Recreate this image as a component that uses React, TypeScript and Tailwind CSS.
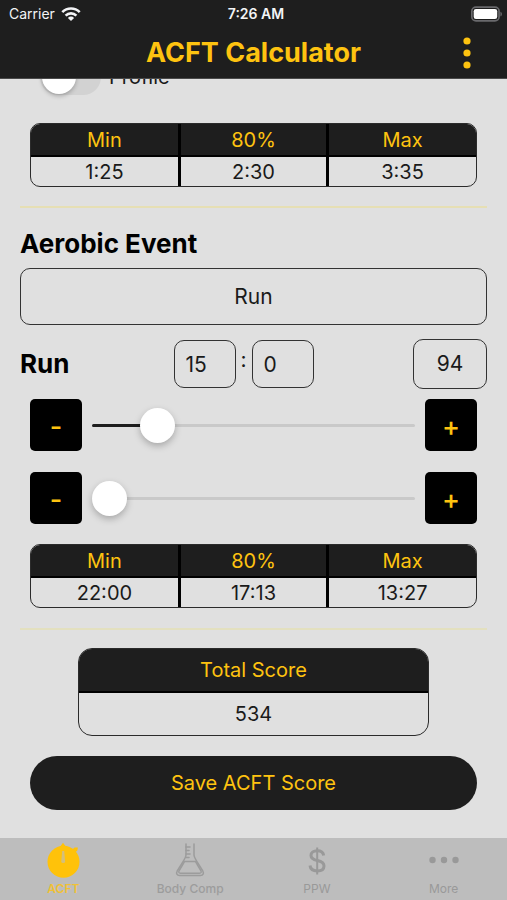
import { useState } from "react";
import type { ReactNode } from "react";

const AEROBIC_EVENTS = ["Run", "Row", "Bike", "Swim"];

function StatusBar() {
  return (
    <div className="grid h-7 grid-cols-3 items-center pl-[9px] pr-1 text-sm text-gray-100">
      <div className="flex items-center gap-1.5">
        <span>Carrier</span>
        <svg viewBox="0 0 20 15" className="h-4 w-5" fill="none" stroke="currentColor" strokeWidth="2.6" aria-hidden="true">
          <path d="M1.3 5.6a12.4 12.4 0 0 1 17.4 0" />
          <path d="M4.6 9.1a7.7 7.7 0 0 1 10.8 0" />
          <path d="M10 14.6 6.9 11.4a4.4 4.4 0 0 1 6.2 0Z" fill="currentColor" stroke="none" />
        </svg>
      </div>
      <span className="text-center font-semibold">7:26 AM</span>
      <svg viewBox="0 0 31 15" className="h-4 w-8 justify-self-end" aria-hidden="true">
        <rect x="0.8" y="0.8" width="26.4" height="13.4" rx="4" fill="none" stroke="#69696c" strokeWidth="1.6" />
        <rect x="2.6" y="2.6" width="22.8" height="9.8" rx="2.2" fill="#fff" />
        <path d="M28.6 5.2c1.6.6 1.6 4 0 4.6Z" fill="#77777a" />
      </svg>
    </div>
  );
}

function Header() {
  return (
    <header className="relative z-10 border-b border-[#4a4a4a] bg-[#1e1e1e]">
      <StatusBar />
      <div className="grid h-[50px] grid-cols-[40px_1fr_40px] items-center px-5">
        <h1 className="col-start-2 text-center text-[27px] leading-8 font-bold text-[#fec310]">ACFT Calculator</h1>
        <button type="button" aria-label="Menu" className="flex justify-center text-[#fec310]">
          <svg viewBox="0 0 8 32" className="h-8 w-2" fill="currentColor" aria-hidden="true">
            <circle cx="4" cy="4" r="3.6" />
            <circle cx="4" cy="16" r="3.6" />
            <circle cx="4" cy="28" r="3.6" />
          </svg>
        </button>
      </div>
    </header>
  );
}

function Standards({ min, mid, max }: { min: string; mid: string; max: string }) {
  return (
    <div className="mx-[10px] overflow-hidden rounded-[10px] border border-[#2b2b2b]">
      <table className="w-full table-fixed border-collapse text-xl">
        <thead>
          <tr className="h-8 border-b-2 border-black bg-[#1e1e1e] text-[#fec310]">
            <th className="font-normal">Min</th>
            <th className="border-x-3 border-black font-normal">80%</th>
            <th className="font-normal">Max</th>
          </tr>
        </thead>
        <tbody>
          <tr className="h-[30px] text-center">
            <td>{min}</td>
            <td className="border-x-3 border-black">{mid}</td>
            <td>{max}</td>
          </tr>
        </tbody>
      </table>
    </div>
  );
}

function StepButton({ label, onClick, children }: { label: string; onClick: () => void; children: ReactNode }) {
  return (
    <button
      type="button"
      aria-label={label}
      onClick={onClick}
      className="flex size-[52px] shrink-0 items-center justify-center rounded-[5px] bg-black pt-1 text-[27px] leading-8 font-medium text-[#fec310]"
    >
      {children}
    </button>
  );
}

type SliderProps = { label: string; value: number; min: number; max: number; onChange: (v: number) => void };

function StepSlider({ label, value, min, max, onChange }: SliderProps) {
  const fill = ((value - min) / (max - min)) * 100;
  const clamp = (v: number) => Math.min(max, Math.max(min, v));
  return (
    <div className="mx-[10px] flex items-center gap-[10px]">
      <StepButton label={`Decrease ${label}`} onClick={() => onChange(clamp(value - 1))}>-</StepButton>
      <div className="relative flex h-9 flex-1 items-center">
        <div className="h-[3px] w-full overflow-hidden rounded-full bg-[#c9c9c9]">
          <div className="h-full bg-[#1e1e1e]" style={{ width: `${fill}%` }} />
        </div>
        <input
          type="range"
          aria-label={label}
          min={min}
          max={max}
          value={value}
          onChange={(e) => onChange(Number(e.target.value))}
          className="absolute inset-0 w-full cursor-pointer appearance-none bg-transparent [&::-webkit-slider-thumb]:size-[35px] [&::-webkit-slider-thumb]:appearance-none [&::-webkit-slider-thumb]:rounded-full [&::-webkit-slider-thumb]:bg-white [&::-webkit-slider-thumb]:shadow-[0_3px_7px_rgba(0,0,0,0.25)]"
        />
      </div>
      <StepButton label={`Increase ${label}`} onClick={() => onChange(clamp(value + 1))}>+</StepButton>
    </div>
  );
}

function StopwatchIcon() {
  return (
    <svg viewBox="0 0 36 36" className="size-9" aria-hidden="true">
      <path d="M18 .8 20.600 4.200h-5.200Z M27.500 7.500 29.500 5.600h3.400l-.6 3-2 1.800Z" fill="#ffc20a" />
      <circle cx="18.500" cy="19.800" r="16" fill="#ffc20a" />
      <path d="M17.200 9h2l.9 10.200a1.900 1.900 0 1 1-3.800 0Z" fill="#d3bf7c" />
    </svg>
  );
}

function FlaskIcon() {
  return (
    <svg viewBox="0 0 36 36" className="size-9" fill="none" stroke="currentColor" strokeWidth="1.5" strokeLinecap="round" strokeLinejoin="round" aria-hidden="true">
      <path d="M14 2v11c0 2-1 3.500-2.500 6L5.200 29c-1.400 2.600-.2 4.500 2.300 4.500h21c2.500 0 3.700-1.900 2.300-4.500l-6.300-10c-1.500-2.500-2.500-4-2.500-6V2" />
      <path d="M12.500 19.500h11l5.300 9c.9 1.700.3 2.700-1.200 2.700H8.400c-1.500 0-2.100-1-1.200-2.700Z" />
      <path d="M14 5h4M14 8.500h3M14 12h4M14 15.500h3" />
    </svg>
  );
}

function DollarIcon() {
  return (
    <svg viewBox="0 0 36 36" className="size-9" fill="none" stroke="currentColor" strokeWidth="3" aria-hidden="true">
      <path d="M24.700 13.500c-.5-3-2.700-4.700-6.500-4.700-3.600 0-6.200 1.800-6.200 4.700 0 3.200 2.700 4.200 6.300 5 3.900.8 6.700 2 6.700 5.400 0 3.200-2.800 5-6.800 5-4.200 0-6.800-2-7.200-5.400" />
      <path d="M18.200 5.500v27" strokeWidth="2" />
    </svg>
  );
}

function MoreIcon() {
  return (
    <svg viewBox="0 0 36 36" className="size-9" fill="currentColor" aria-hidden="true">
      <circle cx="6.500" cy="18" r="3.200" />
      <circle cx="18" cy="18" r="3.200" />
      <circle cx="29.500" cy="18" r="3.200" />
    </svg>
  );
}

const TABS = [
  { name: "ACFT", icon: <StopwatchIcon />, tone: "text-[#f0c136] font-semibold" },
  { name: "Body Comp", icon: <FlaskIcon />, tone: "text-[#9c9c9c] font-medium" },
  { name: "PPW", icon: <DollarIcon />, tone: "text-[#999]" },
  { name: "More", icon: <MoreIcon />, tone: "text-[#999]" },
];

export default function App() {
  const [profile, setProfile] = useState(false);
  const [event, setEvent] = useState("Run");
  const [minutes, setMinutes] = useState(15);
  const [seconds, setSeconds] = useState(0);
  const timeBox = "h-12 w-[62px] rounded-[10px] border border-[#333] bg-transparent pl-[11px] text-[21px]";

  return (
    <div className="flex min-h-screen flex-col bg-[#e0e0e0] font-['Inter','Liberation_Sans',sans-serif] text-[#1a1a1a]">
      <Header />

      <main className="flex flex-1 flex-col overflow-hidden px-5">
        <label className="-mt-5 ml-5 flex h-9 items-center gap-2 text-xl">
          <input type="checkbox" checked={profile} onChange={(e) => setProfile(e.target.checked)} className="peer sr-only" />
          <span className="flex h-9 w-[61px] items-center rounded-full bg-[#d2d2d2] px-0.5 peer-checked:justify-end">
            <span className="size-[34px] rounded-full bg-white shadow-[0_2px_4px_rgba(0,0,0,0.25)]" />
          </span>
          <span>Profile</span>
        </label>

        <div className="mt-7">
          <Standards min="1:25" mid="2:30" max="3:35" />
        </div>

        <hr className="mt-[19px] border-t-2 border-[#e6dfb4]" />

        <h2 className="mt-5 text-[26px] leading-8 font-bold text-black">Aerobic Event</h2>
        <select
          aria-label="Aerobic event"
          value={event}
          onChange={(e) => setEvent(e.target.value)}
          className="mt-2 h-[57px] w-full appearance-none rounded-[10px] border border-[#333] bg-transparent text-[21px] [text-align-last:center]"
        >
          {AEROBIC_EVENTS.map((name) => (
            <option key={name}>{name}</option>
          ))}
        </select>

        <div className="mt-[14px] flex items-center">
          <h2 className="flex-1 text-[26px] leading-8 font-bold text-black">{event}</h2>
          <div className="flex items-center gap-1">
            <input aria-label="Minutes" inputMode="numeric" value={minutes} onChange={(e) => setMinutes(Number(e.target.value) || 0)} className={timeBox} />
            <span className="w-2 pb-2 text-center text-[21px]">:</span>
            <input aria-label="Seconds" inputMode="numeric" value={seconds} onChange={(e) => setSeconds(Number(e.target.value) || 0)} className={timeBox} />
          </div>
          <div className="flex flex-1 justify-end pl-5">
            <output aria-label="Event score" className="flex h-[50px] w-[74px] items-center justify-center rounded-[10px] border border-[#333] text-[21px]">
              94
            </output>
          </div>
        </div>

        <div className="mt-[10px] flex flex-col gap-[21px]">
          <StepSlider label="minutes" value={minutes} min={12} max={30} onChange={setMinutes} />
          <StepSlider label="seconds" value={seconds} min={0} max={59} onChange={setSeconds} />
        </div>

        <div className="mt-5">
          <Standards min="22:00" mid="17:13" max="13:27" />
        </div>

        <hr className="mt-5 border-t-2 border-[#e3e0bf]" />

        <dl className="mx-auto mt-[18px] w-3/4 overflow-hidden rounded-[14px] border border-[#2b2b2b] text-center text-xl">
          <dt className="flex h-11 items-center justify-center border-b-2 border-black bg-[#1e1e1e] text-[#fec310]">Total Score</dt>
          <dd className="flex h-[42px] items-center justify-center">534</dd>
        </dl>

        <button type="button" className="mx-[10px] mt-5 mb-7 h-[54px] rounded-full bg-[#1e1e1e] text-xl text-[#fec310]">
          Save ACFT Score
        </button>
      </main>

      <nav className="grid h-[62px] grid-cols-4 bg-[#bdbdbd] text-xs">
        {TABS.map((tab) => (
          <button key={tab.name} type="button" className={`flex flex-col items-center pt-1 ${tab.tone}`}>
            {tab.icon}
            <span className="leading-[22px]">{tab.name}</span>
          </button>
        ))}
      </nav>
    </div>
  );
}
